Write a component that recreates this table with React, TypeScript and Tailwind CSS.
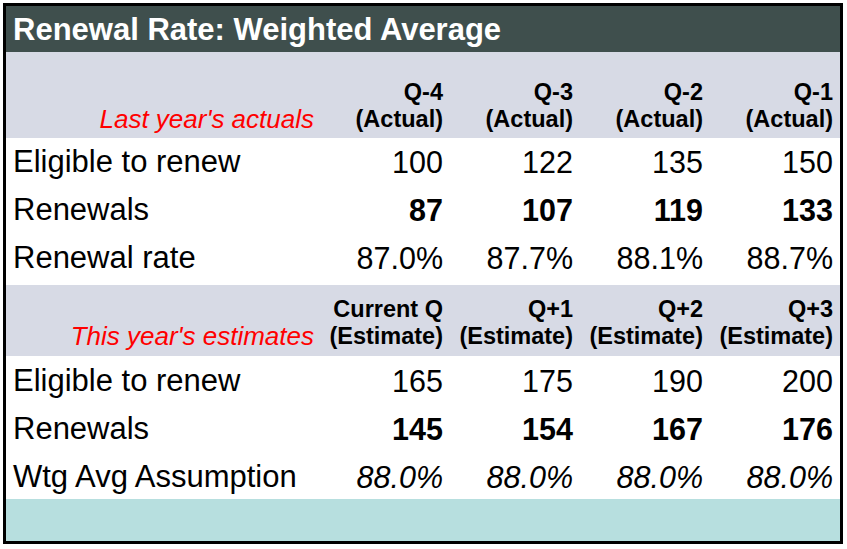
const actualCols = [
  { q: "Q-4", sub: "(Actual)", eligible: 100, renewals: 87, rate: "87.0%" },
  { q: "Q-3", sub: "(Actual)", eligible: 122, renewals: 107, rate: "87.7%" },
  { q: "Q-2", sub: "(Actual)", eligible: 135, renewals: 119, rate: "88.1%" },
  { q: "Q-1", sub: "(Actual)", eligible: 150, renewals: 133, rate: "88.7%" },
]

const estimateCols = [
  { q: "Current Q", sub: "(Estimate)", eligible: 165, renewals: 145, rate: "88.0%" },
  { q: "Q+1", sub: "(Estimate)", eligible: 175, renewals: 154, rate: "88.0%" },
  { q: "Q+2", sub: "(Estimate)", eligible: 190, renewals: 167, rate: "88.0%" },
  { q: "Q+3", sub: "(Estimate)", eligible: 200, renewals: 176, rate: "88.0%" },
]

type Col = (typeof actualCols)[number]

function HeaderBand({
  label,
  cols,
  className,
}: {
  label: string
  cols: Col[]
  className: string
}) {
  return (
    <div className={"grid grid-cols-[314px_repeat(4,130px)] bg-[#d7dae5] " + className}>
      <div className="flex items-end justify-end pr-[6px] text-[26px] leading-[27px] italic text-[#ff0000]">
        {label}
      </div>
      {cols.map((c) => (
        <div
          key={c.q}
          className="flex flex-col items-end justify-end pr-[7px] text-[23.5px] leading-[27px] font-bold"
        >
          <span>{c.q}</span>
          <span>{c.sub}</span>
        </div>
      ))}
    </div>
  )
}

// Excel-style row: text sits at a fixed offset from the row top
function DataRow({
  label,
  values,
  className = "",
  h,
  pt,
}: {
  label: string
  values: string[]
  className?: string
  h: string
  pt: string
}) {
  return (
    <div className={"grid grid-cols-[314px_repeat(4,130px)] items-start leading-[34px] " + h + " " + pt}>
      <div className="pl-[7px] text-[31px]">{label}</div>
      {values.map((v, i) => (
        <div key={i} className={"pr-[7px] text-right text-[30.5px] " + className}>
          {v}
        </div>
      ))}
    </div>
  )
}

export default function App() {
  return (
    <div className="h-[549px] w-[847px] bg-white pt-[3px] pl-[3px] font-['Liberation_Sans',Arial,sans-serif] text-black">
      <div className="flex h-[541px] w-[840px] flex-col border-[3px] border-black">
        <div className="flex h-[46px] items-center bg-[#3f4f4d] pt-[2px] pl-[7px] text-[31px] font-bold text-white">
          Renewal Rate: Weighted Average
        </div>

        <HeaderBand label="Last year's actuals" cols={actualCols} className="h-[86px] pb-[5px]" />
        <DataRow h="h-[48px]" pt="pt-[7px]" label="Eligible to renew" values={actualCols.map((c) => String(c.eligible))} />
        <DataRow h="h-[48px]" pt="pt-[7px]" label="Renewals" className="font-bold" values={actualCols.map((c) => String(c.renewals))} />
        <DataRow h="h-[51px]" pt="pt-[7px]" label="Renewal rate" values={actualCols.map((c) => c.rate)} />

        <HeaderBand label="This year's estimates" cols={estimateCols} className="h-[71px] pb-[6px]" />
        <DataRow h="h-[48px]" pt="pt-[8px]" label="Eligible to renew" values={estimateCols.map((c) => String(c.eligible))} />
        <DataRow h="h-[48px]" pt="pt-[8px]" label="Renewals" className="font-bold" values={estimateCols.map((c) => String(c.renewals))} />
        <DataRow h="h-[47px]" pt="pt-[8px]" label="Wtg Avg Assumption" className="italic" values={estimateCols.map((c) => c.rate)} />

        <div className="flex-1 bg-[#b7dfdf]" />
      </div>
    </div>
  )
}
